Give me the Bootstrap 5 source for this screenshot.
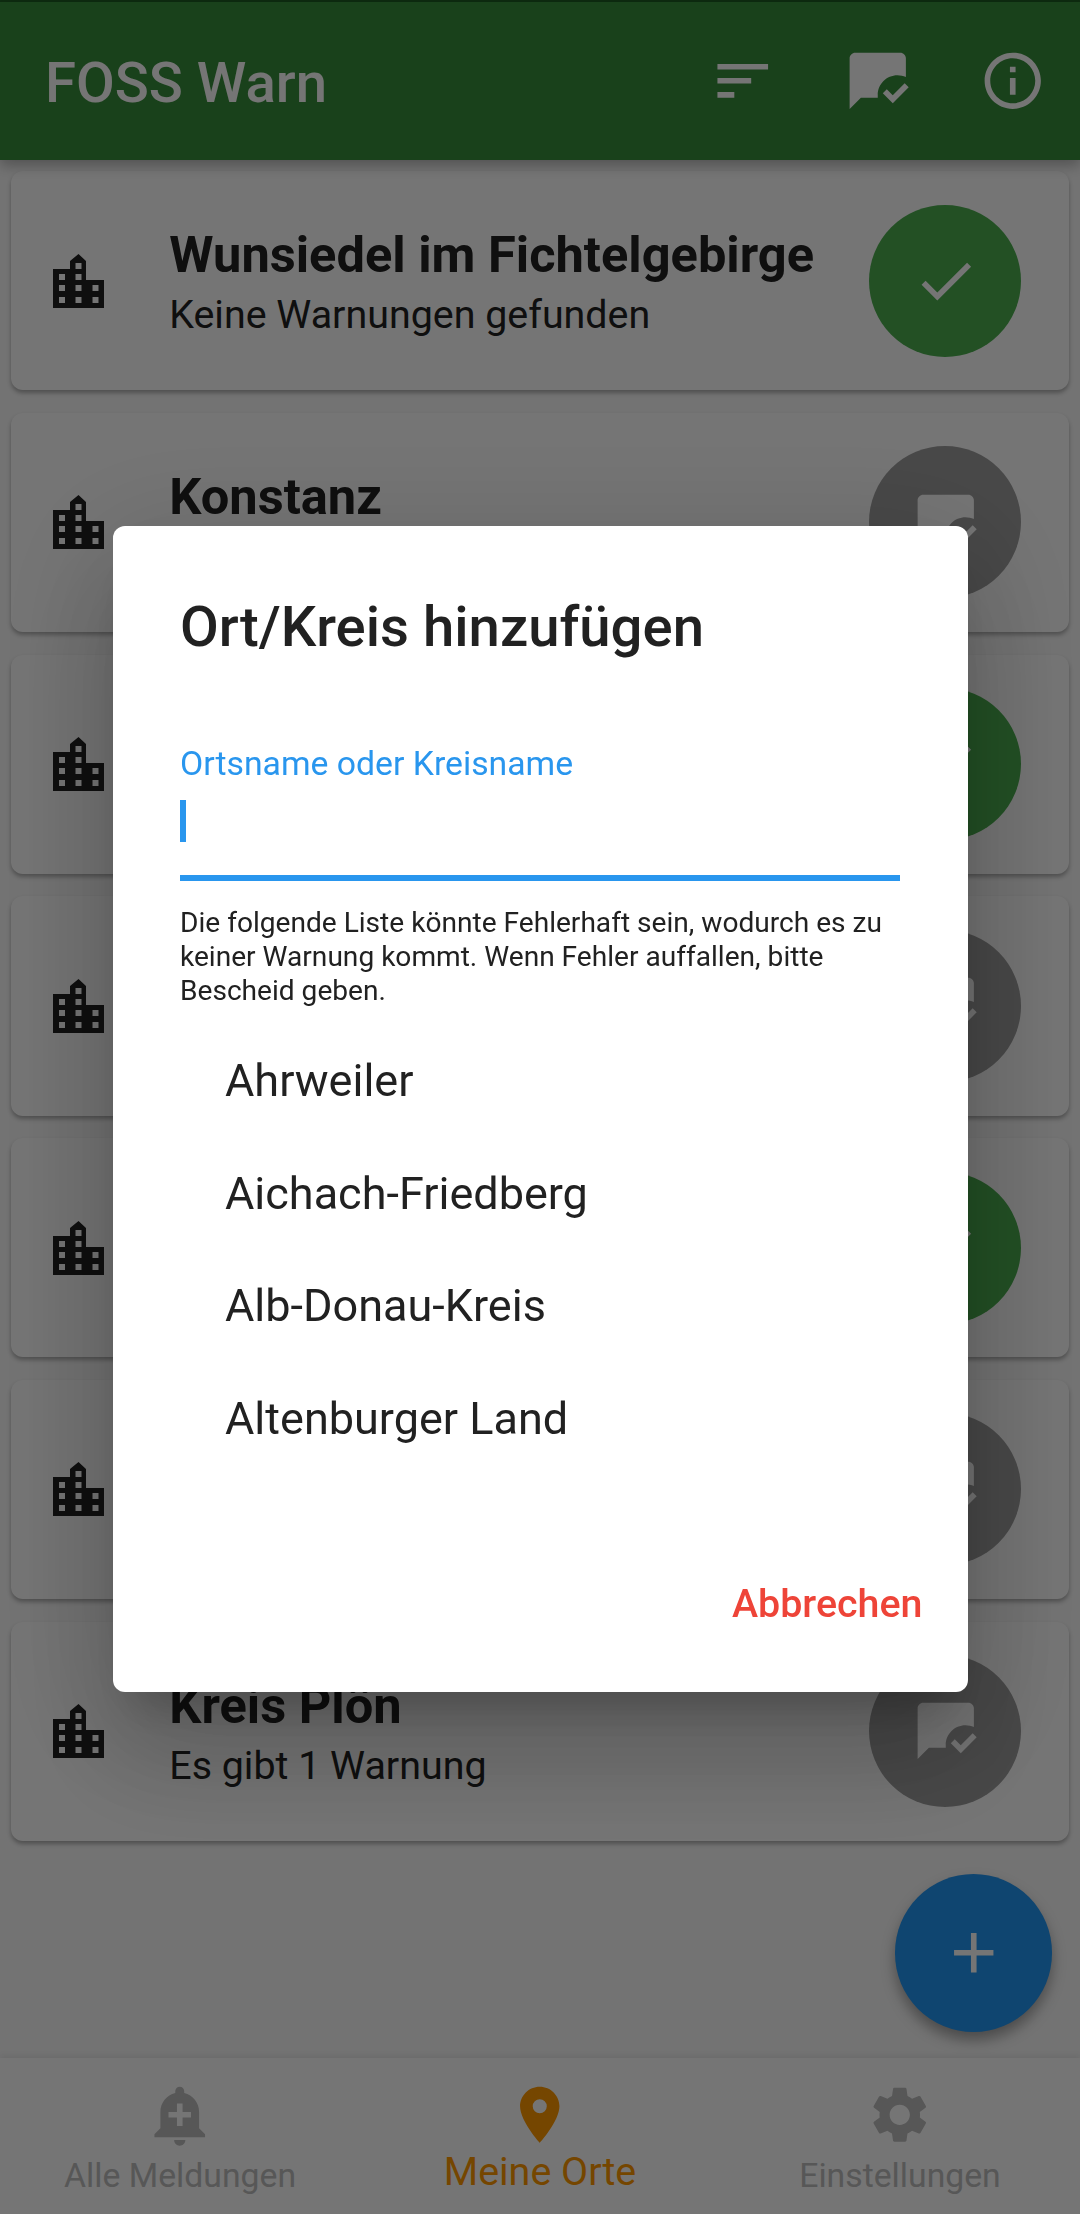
<!DOCTYPE html>
<html lang="de">
<head>
  <meta charset="UTF-8">
  <meta name="viewport" content="width=device-width, initial-scale=1">
  <title>FOSS Warn</title>
  <link href="https://cdn.jsdelivr.net/npm/bootstrap@5.3.2/dist/css/bootstrap.min.css" rel="stylesheet">
  <style>
    body {
      font-family: Roboto, "Liberation Sans", sans-serif;
      background-color: #fafafa;
      height: 2214px;
      overflow: hidden;
    }
    .app-shell { height: 2214px; }
    .status-strip { height: 2px; background-color: #1f6124; }
    .app-bar {
      height: 157.5px;
      background-color: #388e3c;
      color: #fff;
      padding-left: 45px;
      box-shadow: 0 5px 14px rgba(0,0,0,.3);
      z-index: 2;
    }
    .app-title { font-size: 56.25px; font-weight: 500; line-height: 1; padding-top: 4px; }
    .app-action { width: 135px; height: 135px; }
    .app-action svg { width: 67.5px; height: 67.5px; fill: #fff; }

    .place-list { padding-top: 11.5px; }
    .place-card {
      height: 219.25px;
      margin: 0 11.25px 22.5px;
      padding: 0 47.5px 0 42px;
      border: 0;
      border-radius: 12px;
      box-shadow: 0 3px 4px rgba(0,0,0,.3);
    }
    .building { width: 51px; height: 54px; fill: #212121; flex: none; }
    .place-text { margin-left: 65px; padding-top: 9px; color: #212121; }
    .place-name { font-size: 50.6px; font-weight: 700; line-height: 60px; }
    .place-sub { font-size: 39.4px; line-height: 60px; }
    .state-round {
      width: 152px;
      height: 152px;
      flex: none;
      border-radius: 50%;
    }
    .state-round svg { width: 67.5px; height: 67.5px; fill: #fff; }
    .state-ok { background-color: #4caf50; }
    .state-warn { background-color: #9e9e9e; }

    .add-fab {
      position: absolute;
      right: 28px;
      top: 1874px;
      width: 157.5px;
      height: 157.5px;
      border-radius: 50%;
      background-color: #2196f3;
      box-shadow: 0 8px 14px rgba(0,0,0,.35);
    }
    .add-fab svg { width: 67.5px; height: 67.5px; fill: #fff; }

    .bottom-bar {
      height: 156px;
      background-color: #fff;
      color: #bdbdbd;
      box-shadow: 0 -2px 6px rgba(0,0,0,.08);
    }
    .bottom-item { width: 360px; padding-top: 23px; }
    .bottom-item svg { width: 67.5px; height: 67.5px; fill: currentColor; display: block; }
    .bottom-item span { font-size: 33.75px; line-height: 40px; margin-top: 7px; }
    .bottom-item.is-active { color: #ff9800; }
    .bottom-item.is-active span { font-size: 39.4px; line-height: 44px; margin-top: 1px; }

    .scrim { background-color: rgba(0,0,0,.54); z-index: 10; }
    .add-dialog {
      position: fixed;
      left: 112.5px;
      top: 526px;
      width: 855px;
      height: 1166px;
      padding: 0 67.5px;
      background-color: #fff;
      border-radius: 12px;
      color: #212121;
      z-index: 11;
      box-shadow: 0 31px 42px -20px rgba(0,0,0,.2), 0 67px 107px 8px rgba(0,0,0,.14), 0 25px 129px 22px rgba(0,0,0,.12);
    }
    .dialog-title { font-size: 56.25px; font-weight: 500; line-height: 66px; margin: 68px 0 0; }
    .field-label { font-size: 33.75px; line-height: 40px; color: #2996ee; margin-top: 84px; display: block; }
    .field-box { height: 97px; border-bottom: 6px solid #2996ee; padding-top: 16px; }
    .field-caret { display: block; width: 6px; height: 42px; background-color: #2996ee; }
    .field-help { font-size: 28.1px; line-height: 34px; margin: 25px 0 0; }
    .region-list { margin-top: 17px; }
    .region-list .list-group-item {
      border: 0;
      padding: 0 0 0 45px;
      height: 112.5px;
      font-size: 45px;
      line-height: 112.5px;
      color: #212121;
    }
    .cancel-btn {
      position: absolute;
      right: 45px;
      bottom: 63px;
      padding: 0;
      border: 0;
      font-size: 39.4px;
      font-weight: 500;
      line-height: 50px;
      color: #ee4438;
    }
  </style>
</head>
<body>

  <div class="app-shell d-flex flex-column position-relative">
    <div class="status-strip"></div>

    <!-- App bar -->
    <header class="app-bar d-flex align-items-center position-relative">
      <div class="app-title flex-grow-1">FOSS Warn</div>
      <div class="app-action d-flex align-items-center justify-content-center">
        <svg viewBox="0 0 24 24"><path d="M3 18h6v-2H3v2zM3 6v2h18V6H3zm0 7h12v-2H3v2z"/></svg>
      </div>
      <div class="app-action d-flex align-items-center justify-content-center">
        <svg viewBox="0 0 24 24"><path d="M17.34 20l-3.54-3.54 1.41-1.41 2.12 2.12 4.24-4.24L23 14.34 17.34 20zM12 17c0-3.87 3.13-7 7-7 1.08 0 2.09.25 3 .68V4c0-1.1-.9-2-2-2H4c-1.1 0-2 .9-2 2v18l4-4h6v-1z"/></svg>
      </div>
      <div class="app-action d-flex align-items-center justify-content-center">
        <svg viewBox="0 0 24 24"><path d="M11 7h2v2h-2zm0 4h2v6h-2zm1-9C6.48 2 2 6.48 2 12s4.48 10 10 10 10-4.48 10-10S17.52 2 12 2zm0 18c-4.41 0-8-3.59-8-8s3.59-8 8-8 8 3.59 8 8-3.59 8-8 8z"/></svg>
      </div>
    </header>

    <!-- Orte -->
    <main class="place-list flex-grow-1" id="places"></main>

    <div class="add-fab d-flex align-items-center justify-content-center">
      <svg viewBox="0 0 24 24"><path d="M19 13h-6v6h-2v-6H5v-2h6V5h2v6h6v2z"/></svg>
    </div>

    <!-- Bottom navigation -->
    <nav class="bottom-bar d-flex">
      <div class="bottom-item d-flex flex-column align-items-center">
        <svg viewBox="0 0 24 24"><path d="M10.01 21.01c0 1.1.89 1.99 1.99 1.99s1.99-.89 1.99-1.99h-3.98zm8.87-4.19V11c0-3.25-2.25-5.97-5.29-6.69v-.72C13.59 2.71 12.88 2 12 2s-1.59.71-1.59 1.59v.72C7.37 5.03 5.12 7.75 5.12 11v5.82L3 18.94V20h18v-1.06l-2.12-2.12zM16 13.01h-3v3h-2v-3H8V11h3V8h2v3h3v2.01z"/></svg>
        <span>Alle Meldungen</span>
      </div>
      <div class="bottom-item is-active d-flex flex-column align-items-center">
        <svg viewBox="0 0 24 24"><path d="M12 2C8.13 2 5 5.13 5 9c0 5.25 7 13 7 13s7-7.75 7-13c0-3.87-3.13-7-7-7zm0 9.5a2.5 2.5 0 0 1 0-5 2.5 2.5 0 0 1 0 5z"/></svg>
        <span>Meine Orte</span>
      </div>
      <div class="bottom-item d-flex flex-column align-items-center">
        <svg viewBox="0 0 24 24"><path d="M19.14 12.94c.04-.3.06-.61.06-.94 0-.32-.02-.64-.07-.94l2.03-1.58a.49.49 0 0 0 .12-.61l-1.92-3.32a.488.488 0 0 0-.59-.22l-2.39.96c-.5-.38-1.03-.7-1.62-.94l-.36-2.54a.484.484 0 0 0-.48-.41h-3.84c-.24 0-.43.17-.47.41l-.36 2.54c-.59.24-1.13.57-1.62.94l-2.39-.96c-.22-.08-.47 0-.59.22L2.74 8.87c-.12.21-.08.47.12.61l2.03 1.58c-.05.3-.09.63-.09.94s.02.64.07.94l-2.03 1.58a.49.49 0 0 0-.12.61l1.92 3.32c.12.22.37.29.59.22l2.39-.96c.5.38 1.03.7 1.62.94l.36 2.54c.05.24.24.41.48.41h3.84c.24 0 .44-.17.47-.41l.36-2.54c.59-.24 1.13-.56 1.62-.94l2.39.96c.22.08.47 0 .59-.22l1.92-3.32c.12-.22.07-.47-.12-.61l-2.01-1.58zM12 15.6c-1.98 0-3.6-1.62-3.6-3.6s1.62-3.6 3.6-3.6 3.6 1.62 3.6 3.6-1.62 3.6-3.6 3.6z"/></svg>
        <span>Einstellungen</span>
      </div>
    </nav>
  </div>

  <!-- Dialog -->
  <div class="scrim position-fixed top-0 start-0 w-100 h-100"></div>
  <div class="add-dialog">
    <h2 class="dialog-title">Ort/Kreis hinzufügen</h2>
    <label class="field-label">Ortsname oder Kreisname</label>
    <div class="field-box"><span class="field-caret"></span></div>
    <p class="field-help">Die folgende Liste könnte Fehlerhaft sein, wodurch es zu keiner Warnung kommt. Wenn Fehler auffallen, bitte Bescheid geben.</p>
    <ul class="list-group list-group-flush region-list">
      <li class="list-group-item">Ahrweiler</li>
      <li class="list-group-item">Aichach-Friedberg</li>
      <li class="list-group-item">Alb-Donau-Kreis</li>
      <li class="list-group-item">Altenburger Land</li>
    </ul>
    <button type="button" class="btn cancel-btn">Abbrechen</button>
  </div>

  <script src="https://cdn.jsdelivr.net/npm/bootstrap@5.3.2/dist/js/bootstrap.bundle.min.js"></script>
  <script>
    const checkIcon = '<svg viewBox="0 0 24 24"><path d="M9 16.17L4.83 12l-1.42 1.41L9 19 21 7l-1.41-1.41z"/></svg>';
    const chatIcon = '<svg viewBox="0 0 24 24"><path d="M17.34 20l-3.54-3.54 1.41-1.41 2.12 2.12 4.24-4.24L23 14.34 17.34 20zM12 17c0-3.87 3.13-7 7-7 1.08 0 2.09.25 3 .68V4c0-1.1-.9-2-2-2H4c-1.1 0-2 .9-2 2v18l4-4h6v-1z"/></svg>';
    const buildingIcon = '<svg class="building" viewBox="0 0 51 54"><path fill-rule="evenodd" d="M25.5 0L33 7v19h18v28H0V15h17V7zM22.5 9v6h6V9zM6 20v6h6v-6zM22.5 20v6h6v-6zM6 31v6h6v-6zM22.5 31v6h6v-6zM39.5 31v6h6v-6zM6 43v6h6v-6zM22.5 43v6h6v-6zM39.5 43v6h6v-6z"/></svg>';

    // die mittleren Karten liegen komplett hinter dem Dialog
    const places = [
      { name: 'Wunsiedel im Fichtelgebirge', sub: 'Keine Warnungen gefunden', ok: true },
      { name: 'Konstanz', sub: '', ok: false },
      { name: '', sub: '', ok: true },
      { name: '', sub: '', ok: false },
      { name: '', sub: '', ok: true },
      { name: '', sub: '', ok: false },
      { name: 'Kreis Plön', sub: 'Es gibt 1 Warnung', ok: false }
    ];

    document.getElementById('places').innerHTML = places.map(p => `
      <div class="card place-card flex-row align-items-center">
        ${buildingIcon}
        <div class="place-text flex-grow-1">
          <div class="place-name">${p.name || '&nbsp;'}</div>
          <div class="place-sub">${p.sub || '&nbsp;'}</div>
        </div>
        <div class="state-round ${p.ok ? 'state-ok' : 'state-warn'} d-flex align-items-center justify-content-center">
          ${p.ok ? checkIcon : chatIcon}
        </div>
      </div>`).join('');
  </script>
</body>
</html>
